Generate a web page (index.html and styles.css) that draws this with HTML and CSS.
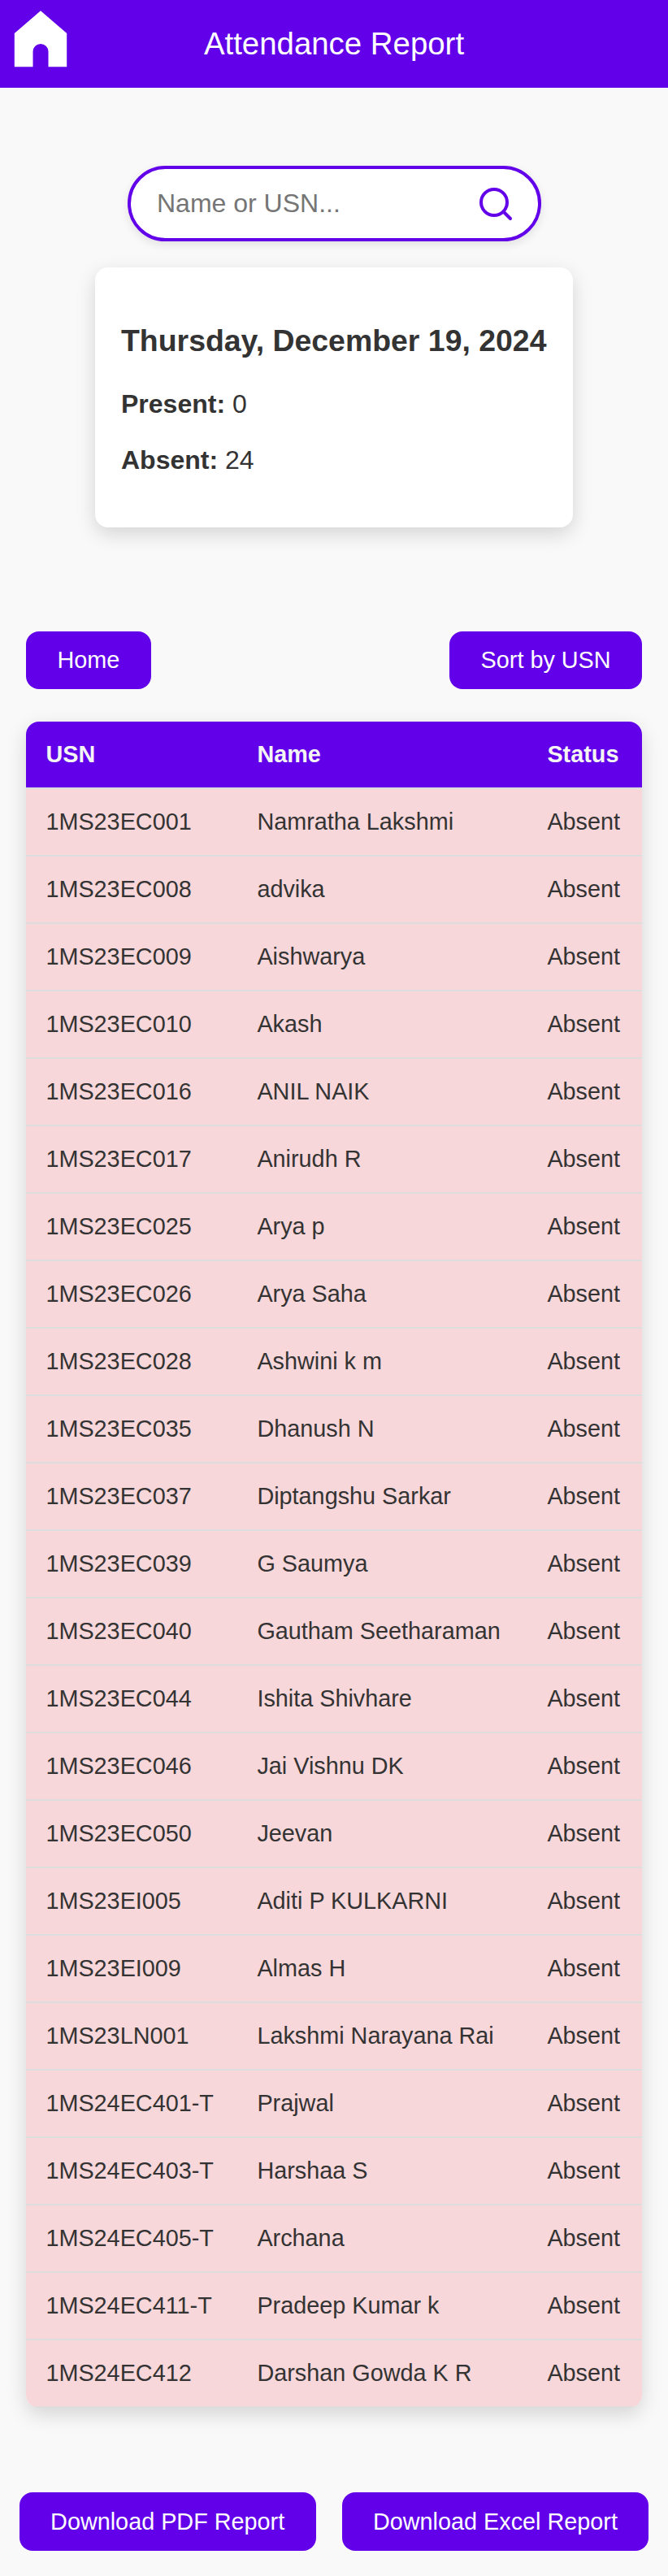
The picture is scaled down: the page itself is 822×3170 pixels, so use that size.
FILE: index.html
```html
<!DOCTYPE html>
<html lang="en">
<head>
<meta charset="utf-8">
<title>Attendance Report</title>
<link rel="stylesheet" href="styles.css">
</head>
<body>
<header class="header">
  <a class="home-link" href="#" aria-label="Home">
    <svg viewBox="0 0 100 96" width="100" height="96"><path d="M50 13.3 82.2 41V82.3H59.5V63.5a9.5 9.5 0 0 0-19 0V82.3H17.8V41Z" fill="#fff"/></svg>
  </a>
  <h1 class="title">Attendance Report</h1>
</header>
<main class="main">
  <div class="search">
    <input class="search-input" type="text" placeholder="Name or USN...">
    <svg class="search-icon" viewBox="0 0 48 48" width="48" height="48" fill="none" stroke="#6200ea" stroke-width="4" stroke-linecap="round"><circle cx="22" cy="22" r="16"/><path d="m34 34 8 8"/></svg>
  </div>
  <section class="summary">
    <h2 class="date">Thursday, December 19, 2024</h2>
    <p class="count"><strong>Present:</strong> 0</p>
    <p class="count"><strong>Absent:</strong> 24</p>
  </section>
  <div class="actions">
    <button class="btn">Home</button>
    <button class="btn">Sort by USN</button>
  </div>
  <table class="report">
    <colgroup><col class="col-usn"><col class="col-name"><col class="col-status"></colgroup>
    <thead><tr><th>USN</th><th>Name</th><th>Status</th></tr></thead>
    <tbody>
      <tr><td>1MS23EC001</td><td>Namratha Lakshmi</td><td>Absent</td></tr>
      <tr><td>1MS23EC008</td><td>advika</td><td>Absent</td></tr>
      <tr><td>1MS23EC009</td><td>Aishwarya</td><td>Absent</td></tr>
      <tr><td>1MS23EC010</td><td>Akash</td><td>Absent</td></tr>
      <tr><td>1MS23EC016</td><td>ANIL NAIK</td><td>Absent</td></tr>
      <tr><td>1MS23EC017</td><td>Anirudh R</td><td>Absent</td></tr>
      <tr><td>1MS23EC025</td><td>Arya p</td><td>Absent</td></tr>
      <tr><td>1MS23EC026</td><td>Arya Saha</td><td>Absent</td></tr>
      <tr><td>1MS23EC028</td><td>Ashwini k m</td><td>Absent</td></tr>
      <tr><td>1MS23EC035</td><td>Dhanush N</td><td>Absent</td></tr>
      <tr><td>1MS23EC037</td><td>Diptangshu Sarkar</td><td>Absent</td></tr>
      <tr><td>1MS23EC039</td><td>G Saumya</td><td>Absent</td></tr>
      <tr><td>1MS23EC040</td><td>Gautham Seetharaman</td><td>Absent</td></tr>
      <tr><td>1MS23EC044</td><td>Ishita Shivhare</td><td>Absent</td></tr>
      <tr><td>1MS23EC046</td><td>Jai Vishnu DK</td><td>Absent</td></tr>
      <tr><td>1MS23EC050</td><td>Jeevan</td><td>Absent</td></tr>
      <tr><td>1MS23EI005</td><td>Aditi P KULKARNI</td><td>Absent</td></tr>
      <tr><td>1MS23EI009</td><td>Almas H</td><td>Absent</td></tr>
      <tr><td>1MS23LN001</td><td>Lakshmi Narayana Rai</td><td>Absent</td></tr>
      <tr><td>1MS24EC401-T</td><td>Prajwal</td><td>Absent</td></tr>
      <tr><td>1MS24EC403-T</td><td>Harshaa S</td><td>Absent</td></tr>
      <tr><td>1MS24EC405-T</td><td>Archana</td><td>Absent</td></tr>
      <tr><td>1MS24EC411-T</td><td>Pradeep Kumar k</td><td>Absent</td></tr>
      <tr><td>1MS24EC412</td><td>Darshan Gowda K R</td><td>Absent</td></tr>
    </tbody>
  </table>
</main>
<footer class="downloads">
  <button class="btn">Download PDF Report</button>
  <button class="btn">Download Excel Report</button>
</footer>
</body>
</html>
```

FILE: styles.css
```css
* { box-sizing: border-box; }
body {
  margin: 0;
  background: #f9f9f9;
  color: #333;
  font-family: "Liberation Sans", Arial, sans-serif;
}
.header {
  position: relative;
  height: 108px;
  padding: 32px;
  background: #6200ea;
  color: #fff;
  text-align: center;
}
.home-link { position: absolute; top: 0; left: 0; }
.home-link svg { display: block; }
.title { margin: 0; font-size: 38.4px; line-height: 44px; font-weight: 400; }
.main { padding: 96px 32px 0; }
.search {
  display: flex;
  align-items: center;
  width: 509px;
  height: 93px;
  margin: 0 0 0 125px;
  padding: 0 28px 0 32px;
  border: 4px solid #6200ea;
  border-radius: 50px;
  background: #fff;
  box-shadow: 0 4px 12px rgba(0, 0, 0, .1);
}
.search-input {
  flex: 1;
  min-width: 0;
  padding: 0;
  border: 0;
  outline: 0;
  background: transparent;
  font: 32px "Liberation Sans", Arial, sans-serif;
}
.search-input::placeholder { color: #757575; }
.search-icon { flex: none; margin-top: 1px; }
.summary {
  width: 588px;
  height: 320px;
  margin: 32px auto 0;
  padding: 69px 32px 0;
  border-radius: 16px;
  background: #fff;
  box-shadow: 0 8px 24px rgba(0, 0, 0, .15);
}
.date { margin: 0 0 38px; font-size: 37.44px; line-height: 43px; white-space: nowrap; }
.count { margin: 0 0 32px; font-size: 32px; line-height: 37px; }
.actions { display: flex; justify-content: space-between; margin-top: 128px; }
.btn {
  height: 71px;
  padding: 0 38.4px;
  border: 0;
  border-radius: 16px;
  background: #6200ea;
  color: #fff;
  font: 28.8px/33px "Liberation Sans", Arial, sans-serif;
  white-space: nowrap;
}
.report {
  width: 100%;
  margin-top: 40px;
  table-layout: fixed;
  border-spacing: 0;
  border-radius: 16px;
  overflow: hidden;
  background: #fff;
  box-shadow: 0 8px 24px rgba(0, 0, 0, .15);
  font-size: 28.8px;
  line-height: 33px;
}
.col-usn { width: 260px; }
.col-name { width: 357px; }
.report th, .report td {
  padding: 24px 0 24px 24.4px;
  border-bottom: 2px solid #ddd;
  text-align: left;
  white-space: nowrap;
}
.report th { background: #6200ea; color: #f4f4f4; }
.report td { background: #f8d7da; }
.downloads { display: flex; justify-content: center; gap: 32px; padding: 104px 0 31px; }
.downloads .btn { height: 72px; }
```
